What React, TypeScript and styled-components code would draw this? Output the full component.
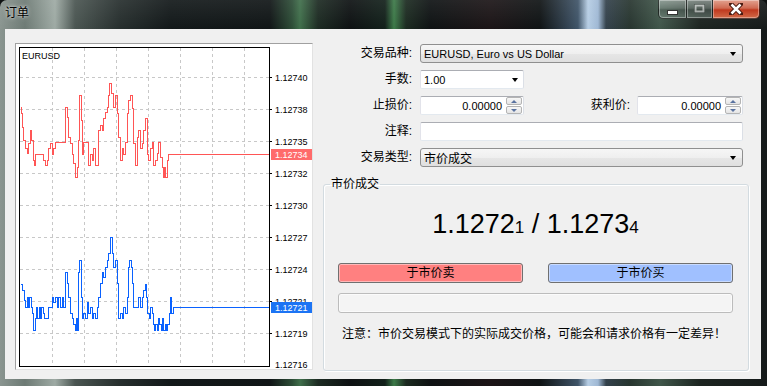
import React from "react";
import styled, { createGlobalStyle } from "styled-components";

const GlobalStyle = createGlobalStyle`
  *, *::before, *::after { box-sizing: border-box; }
  html, body { margin: 0; padding: 0; background: #0e1212; overflow: hidden; }
  body {
    font-family: "Liberation Sans", "Noto Sans CJK SC", sans-serif;
    font-size: 12px;
    color: #000;
  }
`;

const Window = styled.div`
  width: 767px;
  height: 386px;
  display: flex;
  flex-direction: column;
  border-radius: 7px 7px 0 0;
  overflow: hidden;
  background:
    linear-gradient(180deg, rgba(255, 255, 255, 0.08) 0, rgba(0, 0, 0, 0) 30px),
    linear-gradient(
      90deg,
      #8a9590 0,
      #6d7a74 25px,
      #9eaaa4 55px,
      #4a5551 75px,
      #262e2d 120px,
      #121819 170px,
      #101516 270px,
      #2c4c36 292px,
      #3f6e4a 300px,
      #1c2a22 318px,
      #0d1112 350px,
      #12201a 385px,
      #3c7a48 394px,
      #1b2a20 406px,
      #0e1213 430px,
      #1b1416 490px,
      #0f1314 540px,
      #3f5468 578px,
      #b6cde4 588px,
      #9fb8d4 598px,
      #33414b 606px,
      #27352f 630px,
      #40564a 660px,
      #1c2420 700px,
      #151a1a 767px
    );
`;

const TitleBar = styled.div`
  height: 29px;
  display: flex;
  align-items: flex-start;
`;

const Title = styled.div`
  padding-left: 5px;
  line-height: 27px;
  font-size: 12px;
  color: #000;
  text-shadow: 0 0 4px rgba(255, 255, 255, 0.75), 0 0 2px rgba(255, 255, 255, 0.6);
`;

const WinButtons = styled.div`
  margin-left: auto;
  margin-right: 7px;
  display: flex;
  height: 19px;
`;

const WinButton = styled.div<{ $w: number; $kind: "min" | "max" | "close" }>`
  width: ${(p) => p.$w}px;
  height: 19px;
  display: flex;
  align-items: center;
  justify-content: center;
  border: 1px solid rgba(0, 0, 0, 0.6);
  border-top: none;
  border-left-width: ${(p) => (p.$kind === "min" ? 1 : 0)}px;
  border-radius: ${(p) =>
    p.$kind === "min" ? "0 0 0 5px" : p.$kind === "close" ? "0 0 5px 0" : "0"};
  box-shadow: inset 0 0 0 1px rgba(255, 255, 255, 0.35);
  background: ${(p) =>
    p.$kind === "close"
      ? "linear-gradient(180deg, #e3a290 0, #cf6a52 45%, #c0391f 55%, #d26a48 100%)"
      : "linear-gradient(180deg, rgba(200,210,205,0.55) 0, rgba(150,165,158,0.45) 45%, rgba(90,105,98,0.45) 55%, rgba(140,160,150,0.45) 100%)"};
`;

const ChartPanel = styled.div`
  width: 298px;
  height: 327px;
  flex: none;
  border: 1px solid;
  border-color: #a0a0a0 #e2e2e2 #e2e2e2 #a0a0a0;
  background: #fff;
`;

const Client = styled.div`
  flex: 1;
  margin: 0 6px 7px 5px;
  background: #f0f0f0;
  display: flex;
  align-items: flex-start;
  gap: 10px;
  padding: 14px 12px 0 10px;
`;

const FormColumn = styled.div`
  flex: 1;
  display: flex;
  flex-direction: column;
`;

const FormGrid = styled.div`
  display: grid;
  grid-template-columns: 89px 1fr;
  grid-auto-rows: 19px;
  column-gap: 8px;
  row-gap: 7px;
  padding-right: 6px;
  margin-top: 1px;
`;

const Label = styled.div<{ $grow?: boolean }>`
  text-align: right;
  line-height: 19px;
  white-space: nowrap;
  ${(p) => (p.$grow ? "flex: 1; padding-right: 7px;" : "")}
`;

const Select = styled.div<{ $w?: number }>`
  height: 19px;
  width: ${(p) => (p.$w ? `${p.$w}px` : "100%")};
  display: flex;
  align-items: center;
  padding: 0 6px 0 3px;
  border: 1px solid #8f8f8f;
  border-radius: 3px;
  background: linear-gradient(180deg, #f6f6f6 0, #efefef 50%, #e6e6e6 51%, #dfdfdf 100%);
  font-size: 11px;
  white-space: nowrap;
`;

const Box = styled.div<{ $w?: number; $align?: "left" | "right" }>`
  height: 19px;
  width: ${(p) => (p.$w ? `${p.$w}px` : "auto")};
  flex: ${(p) => (p.$w ? "none" : "1")};
  display: flex;
  align-items: center;
  justify-content: ${(p) => (p.$align === "right" ? "flex-end" : "flex-start")};
  padding: 0 1px 0 3px;
  background: #fff;
  border: 1px solid;
  border-color: #abadb3 #dbdfe6 #e3e9ef #e2e3ea;
  border-radius: 2px;
  font-size: 11px;
`;

const Arrow = styled.span<{ $gap?: number }>`
  margin-left: auto;
  margin-right: ${(p) => p.$gap ?? 0}px;
  width: 0;
  height: 0;
  border-left: 3.5px solid transparent;
  border-right: 3.5px solid transparent;
  border-top: 4px solid #000;
`;

const Row = styled.div`
  display: flex;
  align-items: center;
`;

const Spin = styled.div`
  width: 16px;
  height: 17px;
  margin-left: 4px;
  display: flex;
  flex-direction: column;
  gap: 1px;
`;

const SpinHalf = styled.div<{ $dir: "up" | "down" }>`
  flex: 1;
  display: flex;
  align-items: center;
  justify-content: center;
  border: 1px solid #b4b4b4;
  border-radius: 2px;
  background: linear-gradient(180deg, #f7f7f7, #e4e4e4);
  &::after {
    content: "";
    width: 0;
    height: 0;
    border-left: 3px solid transparent;
    border-right: 3px solid transparent;
    ${(p) =>
      p.$dir === "up" ? "border-bottom: 3px solid #5a73a0;" : "border-top: 3px solid #5a73a0;"}
  }
`;

const Group = styled.fieldset`
  margin: 10px 0 0 0;
  height: 194px;
  padding: 18px 15px 0 14px;
  border: 1px solid #d3dbe0;
  border-radius: 3px;
  box-shadow: inset 1px 1px 0 #fff, 1px 1px 0 #fff;
  min-width: 0;
`;

const Legend = styled.legend`
  padding: 0 1px;
  margin-left: -8px;
  line-height: 14px;
  font-size: 12px;
`;

const Price = styled.div`
  text-align: center;
  font-size: 27px;
  line-height: 30px;
  color: #000;
  white-space: pre;
`;

const Pip = styled.span`
  font-size: 17px;
`;

const ButtonRow = styled.div`
  display: flex;
  gap: 25px;
  margin-top: 20px;
`;

const TradeButton = styled.button<{ $tone: "sell" | "buy" }>`
  flex: 1;
  height: 20px;
  padding: 0;
  border: 1px solid #707070;
  border-radius: 3px;
  background: ${(p) => (p.$tone === "sell" ? "#ff8080" : "#a0c0ff")};
  box-shadow: inset 0 0 0 1px
    ${(p) => (p.$tone === "sell" ? "rgba(255,190,190,0.9)" : "rgba(205,222,255,0.9)")};
  font-family: "Liberation Sans", "Noto Sans CJK SC", sans-serif;
  font-size: 12px;
  line-height: 18px;
  color: #000;
`;

const Progress = styled.div`
  height: 20px;
  margin-top: 10px;
  border: 1px solid #bcbcbc;
  border-radius: 3px;
  background: #f4f4f4;
  box-shadow: inset 0 0 0 1px #fbfbfb;
`;

const Note = styled.div`
  margin-top: 14px;
  padding-left: 4px;
  line-height: 14px;
  font-size: 12px;
  white-space: nowrap;
`;

// chart traced from the tick chart, in 3x zoom coordinates
const RED: number[][] = [
  [60, 230], [63, 250], [66, 290], [70, 330], [75, 355], [80, 370], [85, 340], [90, 300],
  [94, 330], [98, 390], [102, 405], [106, 372], [130, 390], [135, 405], [140, 390],
  [145, 355], [150, 340], [155, 372], [160, 355], [165, 337], [195, 230], [200, 260],
  [205, 320], [210, 340], [215, 372], [220, 400], [225, 440], [230, 410], [235, 330],
  [238, 195], [242, 270], [245, 372], [250, 337], [265, 405], [270, 372], [275, 390],
  [280, 355], [285, 405], [295, 300], [300, 285], [305, 300], [310, 265], [315, 245],
  [320, 230], [325, 195], [328, 160], [332, 190], [340, 230], [345, 195], [350, 250],
  [355, 320], [360, 390], [365, 355], [370, 372], [375, 337], [380, 250], [385, 210],
  [390, 195], [395, 235], [400, 340], [405, 405], [410, 320], [415, 300], [420, 355],
  [425, 340], [430, 300], [435, 265], [440, 372], [445, 390], [450, 355], [455, 337],
  [460, 405], [465, 390], [470, 370], [475, 337], [480, 380], [485, 410], [488, 440],
  [492, 410], [496, 440], [500, 390], [505, 372],
];

const BLUE: number[][] = [
  [60, 252], [66, 270], [72, 300], [76, 320], [80, 290], [84, 320], [88, 290], [92, 320],
  [96, 340], [100, 390], [104, 355], [108, 322], [112, 355], [116, 322], [120, 355],
  [124, 322], [128, 340], [132, 355], [145, 322], [155, 290], [160, 305], [165, 290],
  [170, 322], [175, 290], [180, 322], [185, 290], [190, 322], [195, 215], [200, 250],
  [205, 290], [210, 340], [215, 355], [220, 372], [225, 390], [228, 355], [232, 390],
  [235, 215], [238, 180], [242, 290], [246, 355], [250, 340], [255, 355], [260, 305],
  [265, 340], [270, 322], [275, 355], [280, 340], [285, 355], [290, 322], [295, 290],
  [300, 250], [305, 215], [310, 230], [315, 200], [320, 180], [325, 160], [330, 112],
  [335, 160], [340, 200], [345, 180], [350, 250], [355, 355], [360, 340], [365, 355],
  [370, 322], [375, 340], [380, 290], [385, 200], [388, 180], [392, 200], [396, 250],
  [400, 322], [415, 290], [420, 322], [425, 290], [430, 270], [434, 252], [438, 290],
  [442, 340], [446, 355], [450, 322], [455, 340], [458, 372], [462, 390], [466, 372],
  [470, 390], [474, 355], [478, 372], [482, 390], [486, 355], [490, 390], [494, 372],
  [498, 390], [502, 372], [506, 340], [510, 290], [514, 340], [518, 322],
];

const stepPath = (pts: number[][], dy: number) => {
  const m = pts.map(([x, y]) => [Math.round(x / 3) - 16 + 0.5, Math.round(y / 3 + dy) + 0.5]);
  let d = `M${m[0][0]} ${m[0][1]}`;
  for (let i = 1; i < m.length; i++) d += ` H${m[i][0]} V${m[i][1]}`;
  return d + " H253";
};

const LEVELS = [
  "1.12740", "1.12738", "1.12735", "1.12732", "1.12730",
  "1.12727", "1.12724", "1.12721", "1.12719",
];

function TickChart() {
  const axisFont = { fontFamily: "Liberation Sans, sans-serif", fontSize: 9 };
  return (
    <svg width="296" height="325" shapeRendering="crispEdges">
      {[0, 1, 2, 3, 4, 5, 6].map((k) => (
        <line key={"v" + k} x1={36.5 + 32 * k} y1={4} x2={36.5 + 32 * k} y2={322}
          stroke="#c8c8c8" strokeDasharray="3 3" />
      ))}
      {LEVELS.map((_, k) => (
        <line key={"h" + k} x1={4} y1={33.5 + 32 * k} x2={253} y2={33.5 + 32 * k}
          stroke="#c8c8c8" strokeDasharray="3 3" />
      ))}
      <rect x="3.5" y="3.5" width="250" height="319" fill="none" stroke="#000" />
      {LEVELS.map((v, k) => (
        <g key={v}>
          <line x1={253} y1={33.5 + 32 * k} x2={256} y2={33.5 + 32 * k} stroke="#000" />
          <text x={259} y={37 + 32 * k} {...axisFont} fill="#000">{v}</text>
        </g>
      ))}
      <text x={259} y={323.5} {...axisFont} fill="#000">1.12716</text>
      <text x={6} y={14.5} {...axisFont} fill="#000">EURUSD</text>
      <path d={stepPath(RED, -14)} fill="none" stroke="#ff5555" />
      <path d={stepPath(BLUE, 156)} fill="none" stroke="#0a62ff" />
      <rect x="255" y="104.5" width="41" height="11" fill="#ff6b6b" />
      <text x={259} y={113.5} {...axisFont} fill="#fff">1.12734</text>
      <rect x="255" y="258" width="41" height="11" fill="#1c74f4" />
      <text x={259} y={267} {...axisFont} fill="#fff">1.12721</text>
    </svg>
  );
}

function CaptionIcon({ kind }: { kind: "min" | "max" | "close" }) {
  if (kind === "min")
    return (
      <svg width="11" height="12">
        <rect x="0.5" y="7.5" width="10" height="4" fill="#fff" stroke="#333" />
      </svg>
    );
  if (kind === "max")
    return (
      <svg width="11" height="10">
        <rect x="0.5" y="0.5" width="10" height="8" fill="none" stroke="rgba(40,50,45,0.7)" />
        <rect x="1.5" y="1.5" width="8" height="6" fill="none" stroke="rgba(255,255,255,0.55)" strokeWidth="2" />
      </svg>
    );
  return (
    <svg width="14" height="12">
      <path d="M2 1 L12 11 M12 1 L2 11" stroke="#4a1a10" strokeWidth="4.5" strokeLinecap="square" />
      <path d="M2.5 1.5 L11.5 10.5 M11.5 1.5 L2.5 10.5" stroke="#fff" strokeWidth="2.5" />
    </svg>
  );
}

export default function App() {
  return (
    <>
      <GlobalStyle />
      <Window>
        <TitleBar>
          <Title>订单</Title>
          <WinButtons>
            <WinButton $w={29} $kind="min"><CaptionIcon kind="min" /></WinButton>
            <WinButton $w={26} $kind="max"><CaptionIcon kind="max" /></WinButton>
            <WinButton $w={47} $kind="close"><CaptionIcon kind="close" /></WinButton>
          </WinButtons>
        </TitleBar>
        <Client>
          <ChartPanel>
            <TickChart />
          </ChartPanel>
          <FormColumn>
            <FormGrid>
              <Label>交易品种:</Label>
              <Select>
                EURUSD, Euro vs US Dollar
                <Arrow />
              </Select>

              <Label>手数:</Label>
              <Box $w={104}>
                1.00
                <Arrow $gap={4} />
              </Box>

              <Label>止损价:</Label>
              <Row>
                <Box $w={104} $align="right">
                  0.00000
                  <Spin>
                    <SpinHalf $dir="up" />
                    <SpinHalf $dir="down" />
                  </Spin>
                </Box>
                <Label $grow>获利价:</Label>
                <Box $w={106} $align="right">
                  0.00000
                  <Spin>
                    <SpinHalf $dir="up" />
                    <SpinHalf $dir="down" />
                  </Spin>
                </Box>
              </Row>

              <Label>注释:</Label>
              <Box />

              <Label>交易类型:</Label>
              <Select>
                <span style={{ fontSize: 12 }}>市价成交</span>
                <Arrow />
              </Select>
            </FormGrid>

            <Group>
              <Legend>市价成交</Legend>
              <Price>
                1.1272<Pip>1</Pip> / 1.1273<Pip>4</Pip>
              </Price>
              <ButtonRow>
                <TradeButton $tone="sell">于市价卖</TradeButton>
                <TradeButton $tone="buy">于市价买</TradeButton>
              </ButtonRow>
              <Progress />
              <Note>注意：市价交易模式下的实际成交价格，可能会和请求价格有一定差异！</Note>
            </Group>
          </FormColumn>
        </Client>
      </Window>
    </>
  );
}
